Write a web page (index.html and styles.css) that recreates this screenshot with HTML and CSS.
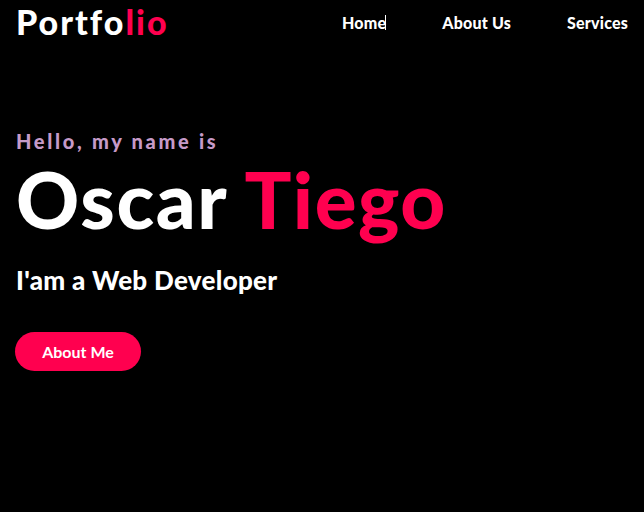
FILE: index.html
```html
<!DOCTYPE html>
<html lang="en">
<head>
<meta charset="utf-8">
<title>Portfolio</title>
<link rel="stylesheet" href="styles.css">
</head>
<body>
<header class="header">
  <a class="logo" href="#">Portfo<span class="accent">lio</span></a>
  <nav class="nav">
    <a class="nav-link" href="#">Home<span class="caret"></span></a>
    <a class="nav-link" href="#">About Us</a>
    <a class="nav-link" href="#">Services</a>
  </nav>
</header>
<main class="hero">
  <p class="hello">Hello, my name is</p>
  <h1 class="name">Oscar <span class="accent">Tiego</span></h1>
  <h2 class="role">I'am a Web Developer</h2>
  <a class="btn" href="#">About Me</a>
</main>
</body>
</html>
```
FILE: styles.css
```css
* { box-sizing: border-box; }
html, body { margin: 0; padding: 0; }
body {
  background: #000;
  color: #fff;
  font-family: "Lato", "Noto Sans", sans-serif;
  width: 644px;
  height: 512px;
  overflow: hidden;
}
a { color: inherit; text-decoration: none; }
.accent { color: #ff004f; }
.header {
  display: flex;
  align-items: center;
  justify-content: space-between;
  padding: 0 16px;
  height: 44px;
}
.logo {
  font-size: 34px;
  font-weight: 900;
  letter-spacing: 2px;
  line-height: 1;
}
.nav {
  display: flex;
  gap: 56px;
}
.nav-link {
  font-size: 16px;
  font-weight: 900;
  letter-spacing: 0.2px;
  position: relative;
}
.caret {
  position: absolute;
  right: 0;
  top: 2px;
  width: 1px;
  height: 15px;
  background: #fff;
}
.hero {
  padding: 0 16px;
}
.hello {
  margin: 87px 0 0;
  font-size: 20px;
  font-weight: 900;
  letter-spacing: 2.7px;
  color: #c69ac8;
  line-height: 1;
}
.name {
  margin: 9px 0 0;
  font-size: 78px;
  font-weight: 900;
  letter-spacing: 1.6px;
  line-height: 1;
}
.role {
  margin: 29px 0 0;
  font-size: 26px;
  font-weight: 900;
  letter-spacing: 0.3px;
  line-height: 1;
}
.btn {
  display: inline-block;
  margin-top: 39px;
  margin-left: -1px;
  background: #ff004f;
  color: #fff;
  border-radius: 20px;
  width: 126px;
  height: 39px;
  line-height: 40px;
  text-align: center;
  font-size: 16px;
  font-weight: 700;
}
```
